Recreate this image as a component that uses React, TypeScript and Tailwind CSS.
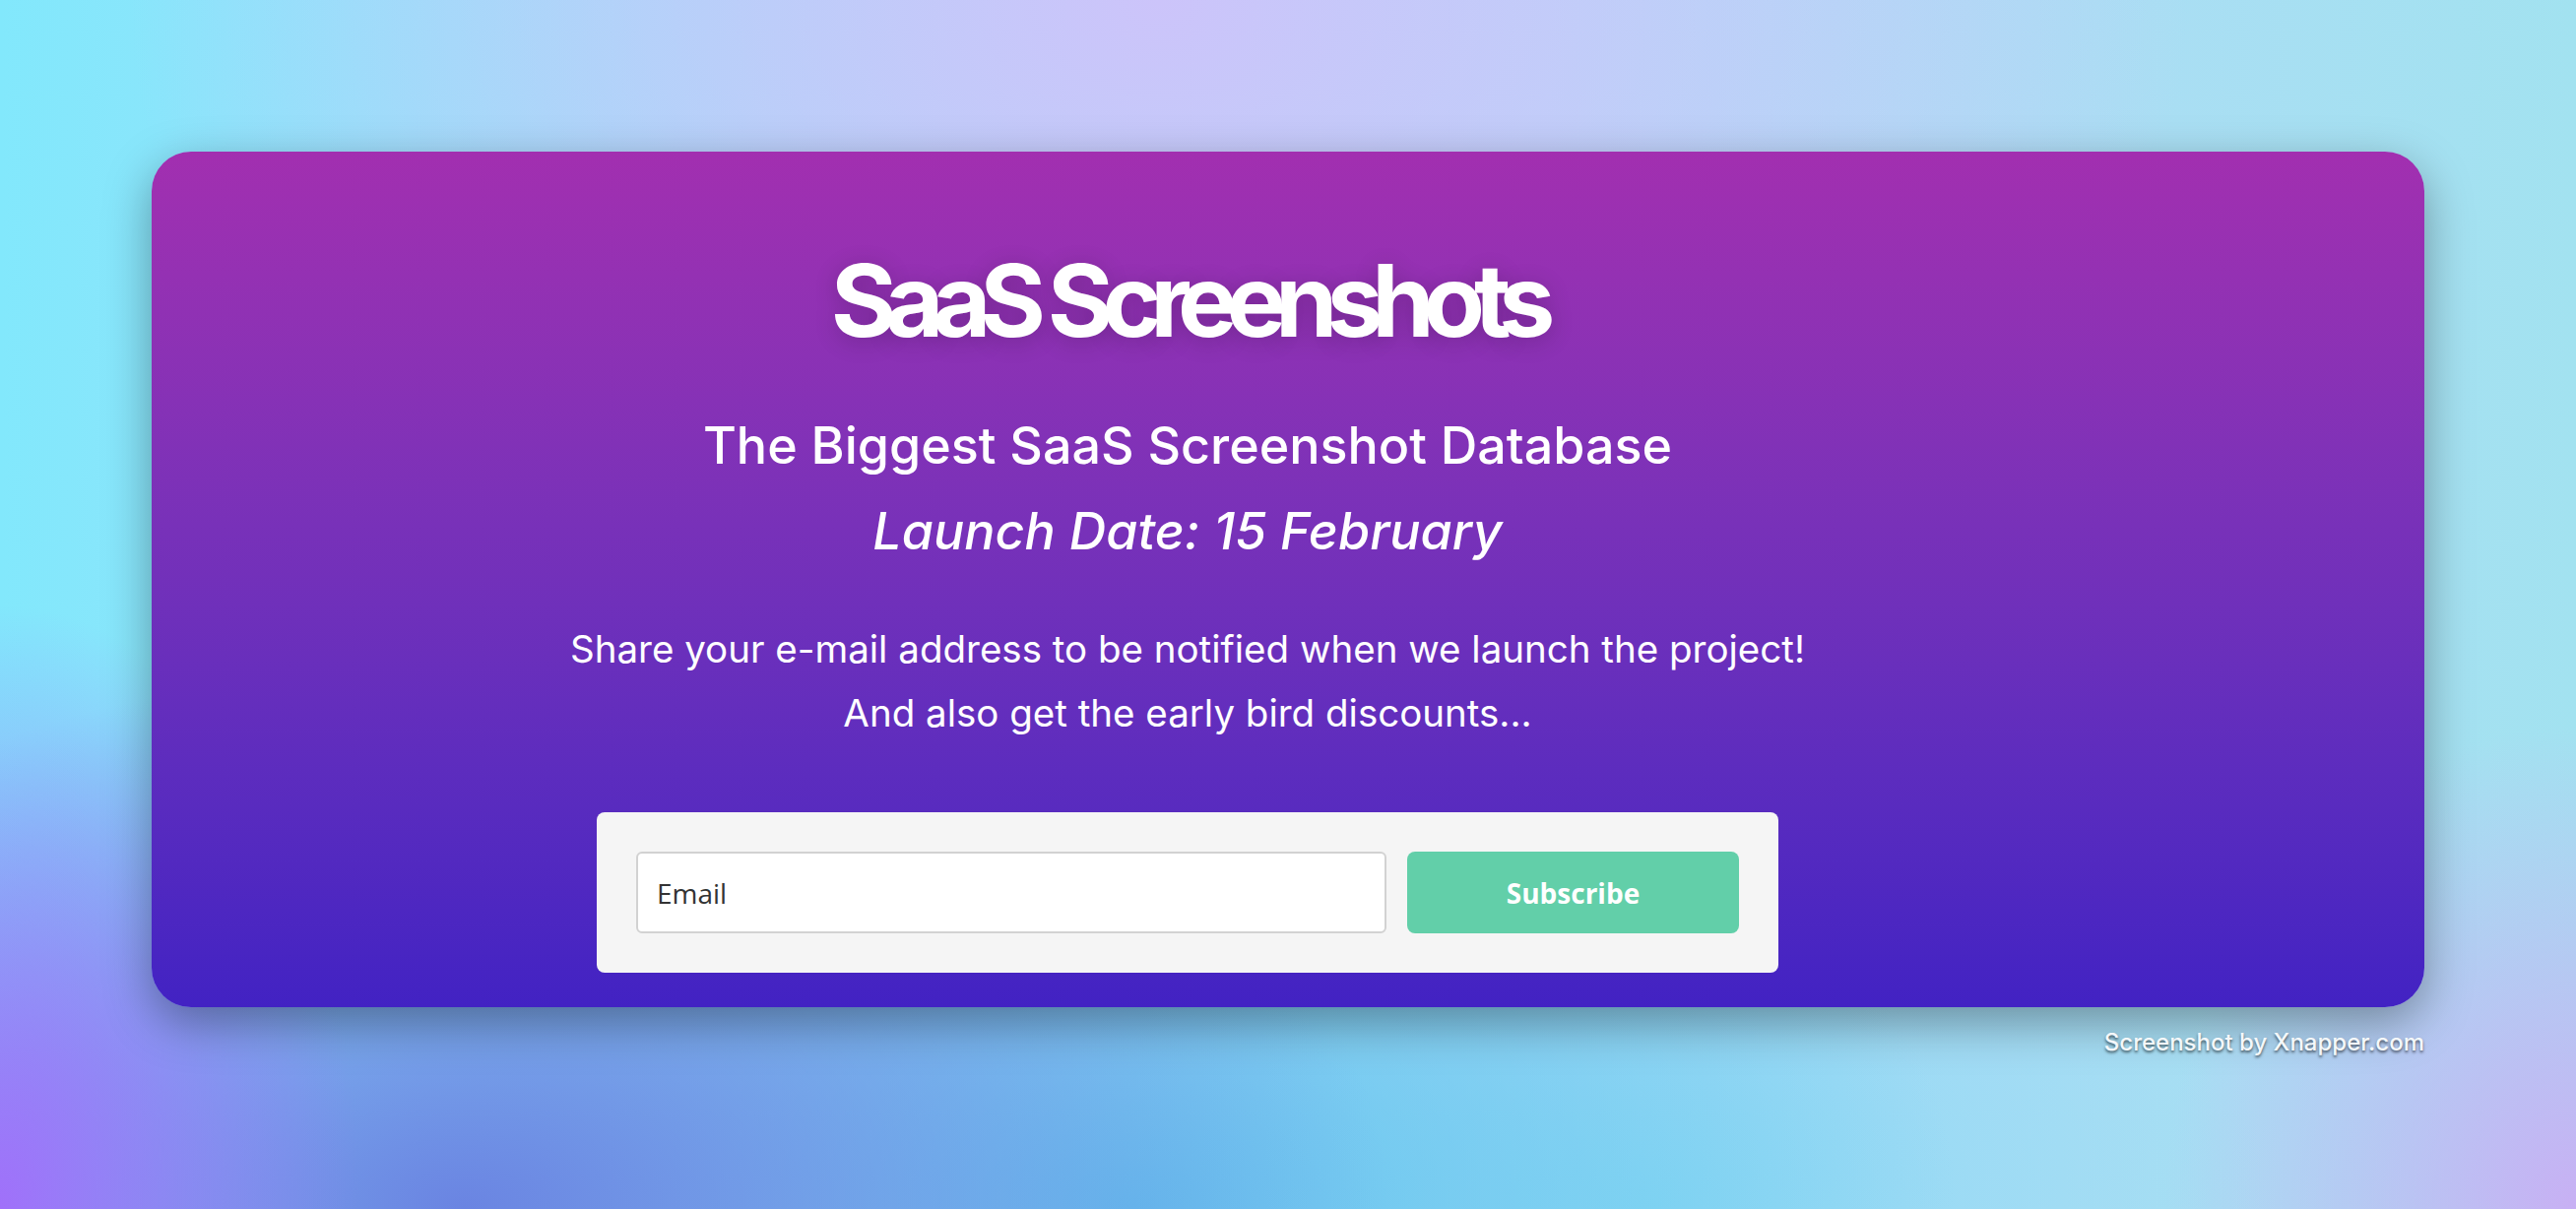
export default function App() {
  return (
    <div className="w-[2616px] h-[1228px] overflow-hidden flex flex-col items-center pt-[154px] bg-[radial-gradient(ellipse_14%_50%_at_0%_100%,#a070fa_0%,transparent_100%),radial-gradient(ellipse_36%_45%_at_18%_100%,#6a84e2_0%,transparent_100%),radial-gradient(ellipse_32%_42%_at_44%_100%,#64c4ee_0%,transparent_100%),radial-gradient(ellipse_24%_36%_at_64%_100%,#8cdaf4_0%,transparent_100%),radial-gradient(ellipse_16%_40%_at_100%_100%,#c8b0f4_0%,transparent_100%),radial-gradient(ellipse_40%_60%_at_45%_0%,#ccc4fa_0%,transparent_100%),linear-gradient(90deg,#82e8fc_0%,#a4dcf8_30%,#b4d8f8_60%,#a2e2f0_100%)]">
      {/* Main card */}
      <div className="w-[2308px] h-[869px] rounded-[40px] bg-gradient-to-b from-[#a22fb0] to-[#4222c3] shadow-[0_16px_48px_rgba(0,0,0,0.35)] flex flex-col items-center pt-[100px] pr-[204px]">
        <h1 className="font-['Inter',sans-serif] font-bold text-white text-[102px] leading-[103px] tracking-[-0.11em] [text-shadow:0_4px_24px_rgba(0,0,0,0.2)]">
          SaaS Screenshots
        </h1>

        <div className="mt-[52px] font-['Inter',sans-serif] font-medium text-white text-[52px] leading-[87px] text-center">
          <p>The Biggest SaaS Screenshot Database</p>
          <p className="italic">Launch Date: 15 February</p>
        </div>

        <div className="mt-[44px] font-['Inter',sans-serif] text-white text-[38.5px] leading-[65px] text-center">
          <p>Share your e-mail address to be notified when we launch the project!</p>
          <p>And also get the early bird discounts...</p>
        </div>

        {/* Subscribe form */}
        <form className="mt-[68px] w-[1200px] bg-[#f5f5f5] rounded-[8px] p-[40px] flex gap-[21px] font-['Open_Sans',sans-serif]">
          <input
            type="email"
            placeholder="Email"
            className="w-[762px] h-[83px] rounded-[6px] bg-white border-2 border-[#d2d2d2] px-[19px] text-[28px] text-[#333] placeholder:text-[#333] outline-none"
          />
          <button
            type="button"
            className="flex-1 h-[83px] rounded-[8px] bg-[#62cfa9] text-white font-bold text-[28px]"
          >
            Subscribe
          </button>
        </form>
      </div>

      {/* Watermark */}
      <div className="w-[2308px] mt-[18px] flex justify-end">
        <span className="font-['Inter',sans-serif] font-medium text-[24px] leading-[36px] text-[#f4f8fa] [text-shadow:0_2px_3px_rgba(0,0,0,0.6)]">
          Screenshot by Xnapper.com
        </span>
      </div>
    </div>
  );
}
